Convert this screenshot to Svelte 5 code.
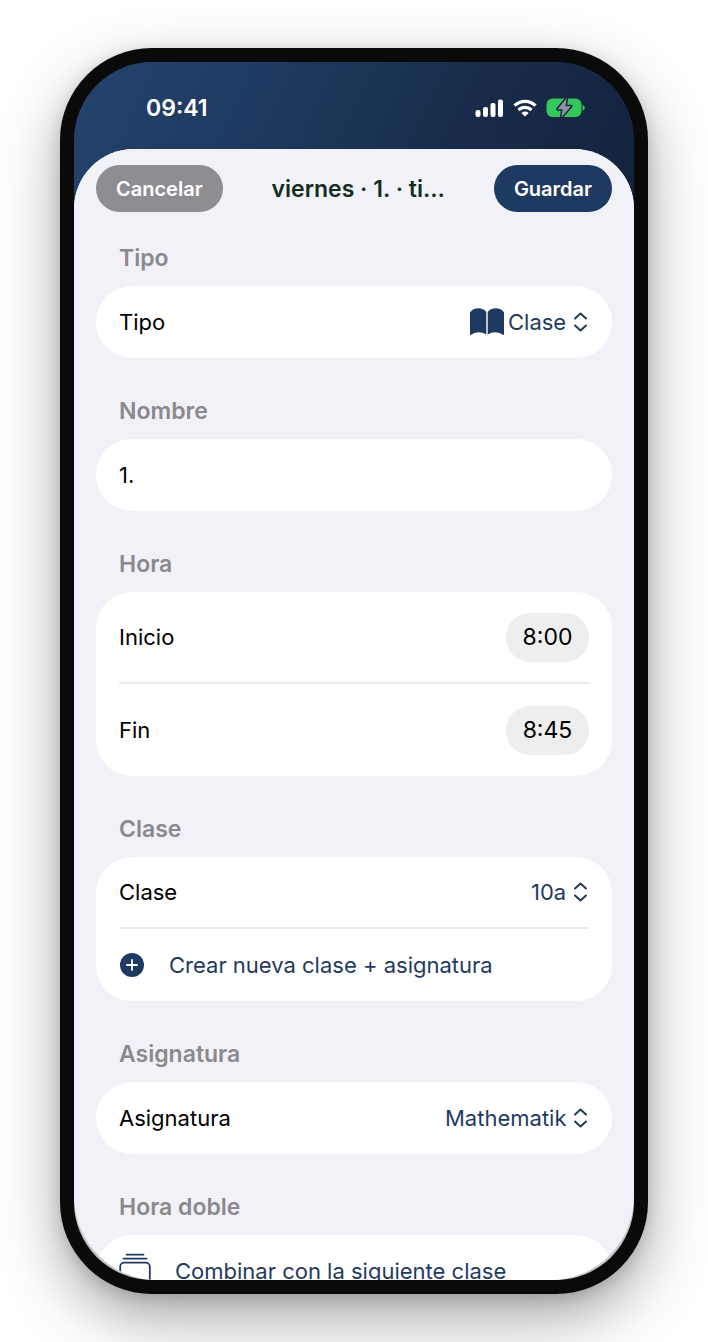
<script>
  let type = 'Clase';
  let name = '1.';
  let start = '8:00';
  let end = '8:45';
  let group = '10a';
  let subject = 'Mathematik';
</script>

<style>
  :global(body) {
    margin: 0;
    background: #fff;
  }

  .page {
    box-sizing: border-box;
    height: 100vh;
    padding: 48px 60px;
    overflow: hidden;
    font-family: Inter, "Liberation Sans", sans-serif;
    font-size: 22px;
    line-height: 28px;
    color: #000;
  }

  .phone {
    box-sizing: border-box;
    height: 100%;
    padding: 14px;
    border-radius: 92px;
    background: #0a0a0a;
    box-shadow: 0 24px 60px rgba(0, 0, 0, 0.35), 0 4px 16px rgba(0, 0, 0, 0.15);
  }

  .screen {
    display: flex;
    flex-direction: column;
    height: 100%;
    overflow: hidden;
    border-radius: 78px;
    background: #c3c4c9 linear-gradient(115deg, #24436c 0%, #1f3a60 30%, #1a3353 50%, #182b49 65%, #12223b 100%) top / 100% 200px no-repeat;
  }

  .status {
    display: flex;
    justify-content: space-between;
    align-items: center;
    height: 87px;
    padding: 4px 49px 0 72px;
    box-sizing: border-box;
    color: #fff;
    font-size: 23px;
    font-weight: 600;
  }

  .status-icons {
    display: flex;
    align-items: center;
    gap: 9px;
  }

  .sheet {
    flex: 1;
    min-height: 0;
    overflow: hidden;
    border-radius: 60px 60px 84px 84px;
    background: #f2f1f7;
  }

  .toolbar {
    display: flex;
    align-items: center;
    padding: 16px 22px 18px;
    background: #f0f2f8;
  }

  .toolbar h1 {
    flex: 1;
    margin: 0;
    text-align: center;
    font-size: 23px;
    font-weight: 600;
    color: #132d20;
  }

  .pill {
    height: 47px;
    padding: 0 20px;
    border: none;
    border-radius: 24px;
    font: inherit;
    font-size: 20px;
    font-weight: 600;
    color: #fff;
    background: #1f3a60;
    cursor: pointer;
  }

  .pill.cancel {
    background: #8e8d92;
  }

  form {
    padding: 0 22px;
  }

  section {
    padding-top: 39px;
  }

  section:first-child {
    padding-top: 14px;
  }

  h2 {
    margin: 0 23px 14px;
    font-size: 23px;
    font-weight: 600;
    color: #8a898e;
  }

  .card {
    padding: 0 23px;
    border-radius: 36px;
    background: #fff;
  }

  .row {
    display: flex;
    align-items: center;
    justify-content: space-between;
    box-sizing: border-box;
    width: 100%;
    height: 72px;
  }

  .row.tall {
    height: 92px;
  }

  .row:not(:last-child) {
    border-bottom: 2px solid #ebebed;
  }

  .picker {
    display: flex;
    align-items: center;
    gap: 4px;
    color: #1f3a60;
  }

  select {
    appearance: none;
    padding: 0;
    border: none;
    background: none;
    font: inherit;
    color: inherit;
    cursor: pointer;
  }

  input {
    box-sizing: border-box;
    width: 100%;
    padding: 0;
    border: none;
    outline: none;
    background: none;
    font: inherit;
    color: inherit;
  }

  .time {
    width: 83px;
    height: 49px;
    border-radius: 24px;
    background: #eee;
    font-size: 23px;
    text-align: center;
  }

  .action {
    justify-content: flex-start;
    gap: 24px;
    padding: 0;
    border: none;
    background: none;
    font: inherit;
    color: #1f3a60;
    cursor: pointer;
  }

  svg {
    display: block;
    flex: none;
  }
</style>

{#snippet chevrons()}
  <svg width="18" height="24" viewBox="0 0 18 24" fill="none" stroke="#1f3a60" stroke-width="2" stroke-linecap="round" stroke-linejoin="round" aria-hidden="true">
    <path d="M4 8.5 L9.5 3.5 L15 8.5 M4 15.5 L9.5 20.5 L15 15.5" />
  </svg>
{/snippet}

<div class="page">
  <div class="phone">
    <div class="screen">
      <div class="status">
        <span>09:41</span>
        <div class="status-icons">
          <svg width="29" height="18" viewBox="0 0 29 18" fill="#fff" aria-hidden="true">
            <rect x="0.5" y="11" width="5" height="7" rx="2" />
            <rect x="8" y="8" width="5" height="10" rx="2" />
            <rect x="15.5" y="4" width="5" height="14" rx="2" />
            <rect x="23" y="0.5" width="5" height="17.5" rx="2" />
          </svg>
          <svg width="24" height="18" viewBox="0 0 24 18" fill="none" stroke="#fff" stroke-width="3.2" aria-hidden="true">
            <path d="M1.5 6.7 A15 15 0 0 1 22.5 6.7" />
            <path d="M5.5 11 A9.3 9.3 0 0 1 18.5 11" />
            <path d="M12 17.6 L8.3 13.9 A5.4 5.4 0 0 1 15.7 13.9 Z" fill="#fff" stroke="none" />
          </svg>
          <svg width="39" height="20" viewBox="0 0 39 20" aria-hidden="true">
            <rect x="0.5" y="0.5" width="35" height="18.5" rx="6" fill="#34c759" />
            <path d="M36.5 6.8 Q38.8 7.6 38.8 9.8 Q38.8 12 36.5 12.8 Z" fill="#34c759" />
            <path d="M20.8 0 L11.5 11.2 H16.6 L15.3 19.5 L25 8.2 H19.5 Z" fill="#8e929f" stroke="#17294a" stroke-width="3" stroke-linejoin="round" paint-order="stroke" />
          </svg>
        </div>
      </div>

      <div class="sheet">
        <header class="toolbar">
          <button type="button" class="pill cancel">Cancelar</button>
          <h1>viernes · 1. · ti...</h1>
          <button type="submit" form="lesson" class="pill">Guardar</button>
        </header>

        <form id="lesson" on:submit|preventDefault>
          <section>
            <h2>Tipo</h2>
            <div class="card">
              <div class="row">
                <label for="type">Tipo</label>
                <div class="picker">
                  <svg width="34" height="28" viewBox="0 0 34 28" fill="#1f3a60" aria-hidden="true">
                    <path d="M0 4.5 Q3 0.3 8.3 0.3 Q13.5 0.3 16.3 4 V26.5 Q13 24.2 8.5 24.2 Q4 24.2 1.2 26.7 Q0 27.3 0 26 Z" />
                    <path d="M34 4.5 Q31 0.3 25.7 0.3 Q20.5 0.3 17.7 4 V26.5 Q21 24.2 25.5 24.2 Q30 24.2 32.8 26.7 Q34 27.3 34 26 Z" />
                  </svg>
                  <select id="type" bind:value={type}>
                    <option>Clase</option>
                  </select>
                  {@render chevrons()}
                </div>
              </div>
            </div>
          </section>

          <section>
            <h2>Nombre</h2>
            <div class="card">
              <div class="row">
                <input type="text" aria-label="Nombre" bind:value={name}>
              </div>
            </div>
          </section>

          <section>
            <h2>Hora</h2>
            <div class="card">
              <div class="row tall">
                <label for="start">Inicio</label>
                <input type="text" class="time" id="start" bind:value={start}>
              </div>
              <div class="row tall">
                <label for="end">Fin</label>
                <input type="text" class="time" id="end" bind:value={end}>
              </div>
            </div>
          </section>

          <section>
            <h2>Clase</h2>
            <div class="card">
              <div class="row">
                <label for="group">Clase</label>
                <div class="picker">
                  <select id="group" bind:value={group}>
                    <option>10a</option>
                  </select>
                  {@render chevrons()}
                </div>
              </div>
              <button type="button" class="row action">
                <svg width="26" height="26" viewBox="0 0 26 26" aria-hidden="true">
                  <circle cx="13" cy="13" r="12" fill="#1f3a60" />
                  <path d="M13 8 V18 M8 13 H18" stroke="#fff" stroke-width="1.8" stroke-linecap="round" />
                </svg>
                Crear nueva clase + asignatura
              </button>
            </div>
          </section>

          <section>
            <h2>Asignatura</h2>
            <div class="card">
              <div class="row">
                <label for="subject">Asignatura</label>
                <div class="picker">
                  <select id="subject" bind:value={subject}>
                    <option>Mathematik</option>
                  </select>
                  {@render chevrons()}
                </div>
              </div>
            </div>
          </section>

          <section>
            <h2>Hora doble</h2>
            <div class="card">
              <button type="button" class="row action">
                <svg width="32" height="36" viewBox="0 0 32 36" fill="none" stroke="#1f3a60" stroke-width="1.8" stroke-linecap="round" aria-hidden="true">
                  <path d="M7.5 1.6 H24.5 M4.5 5.6 H27.5" />
                  <rect x="1.2" y="9.6" width="29.6" height="24" rx="4" />
                </svg>
                Combinar con la siguiente clase
              </button>
            </div>
          </section>
        </form>
      </div>
    </div>
  </div>
</div>
